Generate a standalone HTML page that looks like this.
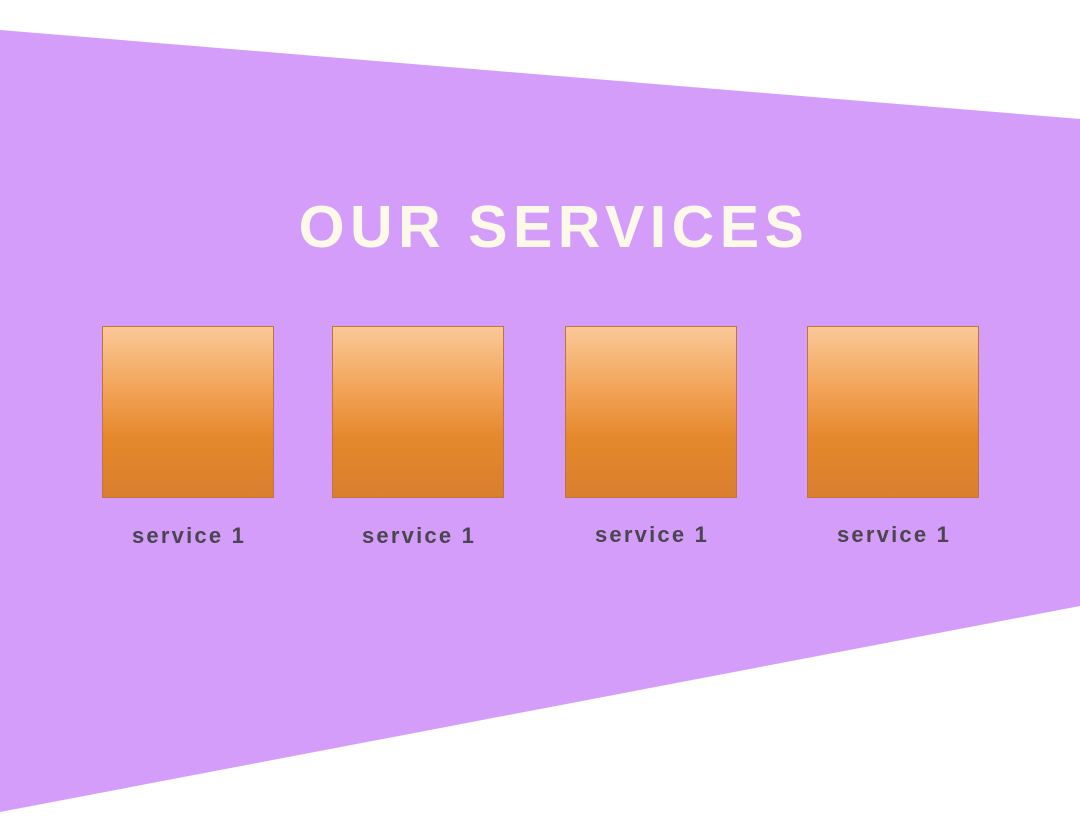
<!DOCTYPE html>
<html><head><style>
html,body{margin:0;padding:0;background:#fff;width:1080px;height:834px;overflow:hidden;position:relative;font-family:"Liberation Sans",Arial,sans-serif}
svg.bg{position:absolute;left:0;top:0}
h1{position:absolute;left:0;width:1108px;top:194px;margin:0;text-align:center;font-size:59px;font-weight:bold;color:#fcf9e9;letter-spacing:5.5px;line-height:66px}
.b{position:absolute;top:326px;width:170px;height:170px;border:1px solid #c0733a;background:linear-gradient(#fac898 0%,#f3a55a 35%,#e5882c 65%,#d97f2e 100%)}
.l{position:absolute;width:174px;text-align:center;font-size:22px;font-weight:bold;color:#4a4650;letter-spacing:2.2px;line-height:24px}
</style></head><body>
<svg class="bg" width="1080" height="834"><polygon points="0,30 1080,119 1080,606 0,812" fill="#d49dfa"/></svg>
<h1>OUR SERVICES</h1>
<div class="b" style="left:102px"></div>
<div class="b" style="left:332px"></div>
<div class="b" style="left:565px"></div>
<div class="b" style="left:807px"></div>
<div class="l" style="left:102px;top:524px">service 1</div>
<div class="l" style="left:332px;top:524px">service 1</div>
<div class="l" style="left:565px;top:523px">service 1</div>
<div class="l" style="left:807px;top:523px">service 1</div>
</body></html>
